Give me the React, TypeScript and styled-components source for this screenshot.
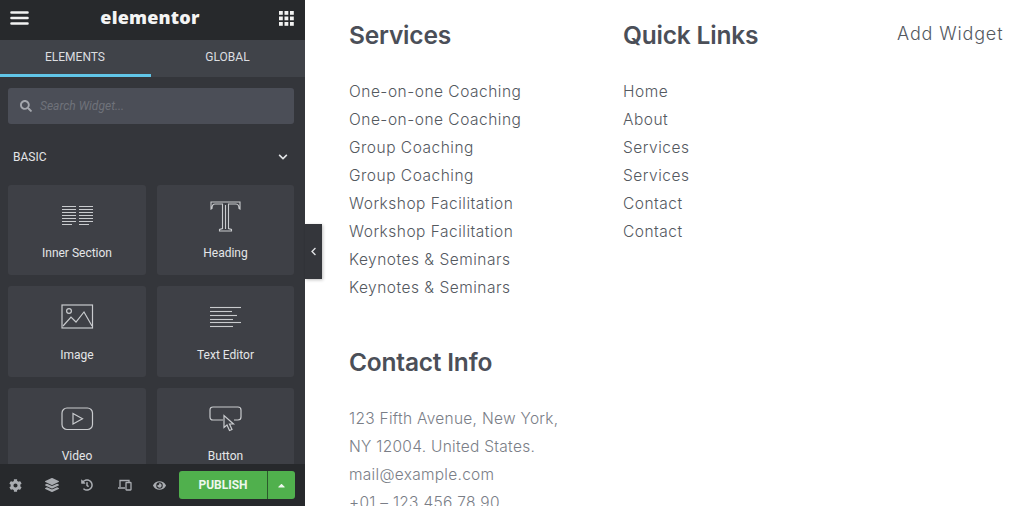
import React from "react";
import styled, { createGlobalStyle } from "styled-components";
import { FaCog, FaLayerGroup, FaHistory, FaEye, FaCaretUp, FaChevronDown, FaChevronLeft, FaSearch } from "react-icons/fa";

const GlobalStyle = createGlobalStyle`
    html, body {
        margin: 0;
        height: 100%;
        overflow: hidden;
        background: #fff;
    }
    * { box-sizing: border-box; }
`;

const Page = styled.div`
    display: flex;
    width: 1023px;
    height: 506px;
    overflow: hidden;
    position: relative;
`;

const Panel = styled.aside`
    width: 305px;
    height: 506px;
    flex: none;
    display: flex;
    flex-direction: column;
    background: #34363b;
    font-family: Roboto, "Liberation Sans", sans-serif;
    color: #e6e8ea;
`;

const Header = styled.header`
    height: 40px;
    flex: none;
    display: flex;
    align-items: center;
    justify-content: space-between;
    padding: 0 11px 4px 10px;
    background: #27292c;
`;

const Logo = styled.div`
    font-family: "Open Sans", sans-serif;
    font-weight: 800;
    font-size: 18px;
    letter-spacing: 0.2px;
    color: #f4f4f4;
    margin: -3px 8px 0 0;
`;

const Tabs = styled.div`
    display: flex;
    height: 37px;
    flex: none;
    background: #404349;
`;

const Tab = styled.div<{ $active?: boolean; $width: number }>`
    width: ${p => p.$width}px;
    display: flex;
    align-items: center;
    justify-content: center;
    font-size: 12px;
    padding: 1px 1px 1px 0;
    color: #dcdee0;
    border-bottom: 3px solid ${p => (p.$active ? "#61c6e8" : "transparent")};
`;

const SearchBox = styled.div`
    margin: 11px 11px 0 8px;
    height: 36px;
    flex: none;
    display: flex;
    align-items: center;
    gap: 8px;
    padding-left: 12px;
    border-radius: 3px;
    background: #4b4e57;
    color: #a4a7ad;
`;

const SearchHint = styled.span`
    font-size: 12px;
    font-style: italic;
    color: #6f727a;
`;

const SectionTitle = styled.div`
    height: 61px;
    flex: none;
    display: flex;
    align-items: center;
    justify-content: space-between;
    padding: 4px 17px 0 13px;
    font-size: 12px;
    color: #e3e5e7;
`;

const Widgets = styled.div`
    display: grid;
    grid-template-columns: 138px 137px;
    grid-template-rows: 90px 91px 90px;
    column-gap: 11px;
    row-gap: 11px;
    padding-left: 8px;
    height: 279px;
    flex: none;
    overflow: hidden;
`;

const Card = styled.div`
    display: flex;
    flex-direction: column;
    align-items: center;
    padding-bottom: 15px;
    border-radius: 3px;
    background: #3e4046;
    font-size: 12px;
    font-weight: 400;
    color: #e4e6e8;
`;

const CardIcon = styled.div`
    height: 61px;
    flex: none;
    margin-bottom: auto;
    display: flex;
    align-items: center;
    justify-content: center;
`;

const Footer = styled.footer`
    height: 42px;
    flex: none;
    display: flex;
    align-items: center;
    padding-left: 9px;
    background: #27292c;
    color: #a9acb1;
`;

const FooterIcon = styled.div<{ $width: number }>`
    width: ${p => p.$width}px;
    display: flex;
    font-size: 13px;
`;

const Publish = styled.div`
    display: flex;
    height: 28px;
    margin-left: 6px;
    border-radius: 3px;
    overflow: hidden;
    background: #50b04d;
    color: #eef7ee;
    font-size: 12px;
    font-weight: 700;
`;

const PublishLabel = styled.div`
    width: 89px;
    display: flex;
    align-items: center;
    justify-content: center;
    border-right: 1px solid #2b5a2b;
`;

const PublishCaret = styled.div`
    width: 27px;
    display: flex;
    align-items: center;
    justify-content: center;
    font-size: 11px;
`;

const Collapse = styled.div`
    position: absolute;
    left: 305px;
    top: 224px;
    width: 17px;
    height: 55px;
    display: flex;
    align-items: center;
    justify-content: center;
    background: #34363b;
    color: #dfe1e3;
    font-size: 9px;
    box-shadow: 1px 1px 3px rgba(0, 0, 0, 0.25);
`;

const Content = styled.main`
    flex: 1;
    display: grid;
    grid-template-columns: 274px 274px 1fr;
    padding: 18px 0 0 44px;
    color: #54595f;
`;

const Column = styled.section``;

const Title = styled.h2`
    margin: 0;
    height: 34px;
    line-height: 34px;
    font-family: Inter, sans-serif;
    font-size: 24.5px;
    font-weight: 600;
    letter-spacing: -0.2px;
    color: #4b4f58;
`;

const List = styled.ul<{ $muted?: boolean }>`
    list-style: none;
    margin: 26px 0 0;
    padding: 0;
    font-family: Inter, sans-serif;
    font-size: 15.5px;
    font-weight: 300;
    letter-spacing: ${p => (p.$muted ? "0.28px" : "0.5px")};
    line-height: 28px;
    white-space: nowrap;
    color: ${p => (p.$muted ? "#7a7e87" : "#54595f")};
`;

const ContactBlock = styled.div`
    margin-top: 43px;
`;

const AddWidget = styled.div`
    margin-top: 4px;
    font-family: Inter, sans-serif;
    font-size: 18px;
    font-weight: 300;
    letter-spacing: 0.85px;
    line-height: 24px;
    color: #54595f;
`;

const Line = ({ x1, x2, y }: { x1: number; x2: number; y: number }) => (
    <line x1={x1} x2={x2} y1={y} y2={y} />
);

const InnerSectionIcon = () => (
    <svg width="33" height="24" viewBox="0 0 33 24" fill="none" stroke="#c9cbce" strokeWidth="1">
        {[2, 5, 8, 11, 14, 17, 20].map((y, i) => (
            <React.Fragment key={y}>
                <Line x1={1} x2={i === 6 ? 11 : 15} y={y + 0.5} />
                <Line x1={18} x2={i === 6 ? 28 : 32} y={y + 0.5} />
            </React.Fragment>
        ))}
    </svg>
);

const HeadingIcon = () => (
    <svg width="31" height="32" viewBox="0 0 31 32" fill="none" stroke="#c9cbce" strokeWidth="1.1">
        <path d="M1 9V2h29v7l-1-.5c0-2.5-1-4.500-3-4.500h-7.500v24.500l3 1V31H9.500v-1.500l3-1V4H5C3 4 2 6 2 8.500z" />
        <path d="M15.500 5v24" />
    </svg>
);

const ImageIcon = () => (
    <svg width="33" height="26" viewBox="0 0 33 26" fill="none" stroke="#c9cbce" strokeWidth="1.2">
        <rect x="1" y="1" width="30.500" height="23" />
        <circle cx="8" cy="7" r="2.400" />
        <path d="M2 22l8-9 5 5 8-10 8 14" />
    </svg>
);

const TextEditorIcon = () => (
    <svg width="33" height="22" viewBox="0 0 33 22" fill="none" stroke="#c9cbce" strokeWidth="1.100">
        <Line x1={1} x2={32} y={1.5} />
        <Line x1={1} x2={23} y={5.5} />
        <Line x1={1} x2={28} y={9.5} />
        <Line x1={1} x2={24} y={13.500} />
        <Line x1={1} x2={32} y={16.500} />
        <Line x1={1} x2={24} y={20.500} />
    </svg>
);

const VideoIcon = () => (
    <svg width="33" height="24" viewBox="0 0 33 24" fill="none" stroke="#c9cbce" strokeWidth="1.200">
        <rect x="1" y="1" width="30.500" height="21.500" rx="5" />
        <path d="M12 6.500v10.500l9.500-5.250z" />
    </svg>
);

const ButtonIcon = () => (
    <svg width="33" height="26" viewBox="0 0 33 26" fill="none" stroke="#c9cbce" strokeWidth="1.200">
        <path d="M14 14H4c-2 0-3-1-3-3V4c0-2 1-3 3-3h25c2 0 3 1 3 3v7c0 2-1 3-3 3h-4" />
        <path d="M15 9.500v12l3-2.500 2.500 5.500 2.500-1-2.500-5.500h4z" fill="#3e4046" />
    </svg>
);

const MenuIcon = () => (
    <svg width="19" height="14" viewBox="0 0 19 14" stroke="#f2f2f2" strokeWidth="2.600" strokeLinecap="round">
        <path d="M1.500 1.500h16M1.500 7h16M1.500 12.500h16" />
    </svg>
);

const AppsIcon = () => (
    <svg width="15" height="15" viewBox="0 0 15 15" fill="#f2f2f2">
        {[0, 5.500, 11].flatMap(y =>
            [0, 5.500, 11].map(x => <rect key={`${x}-${y}`} x={x} y={y} width="3.800" height="3.800" />)
        )}
    </svg>
);

const ResponsiveIcon = () => (
    <svg width="14" height="12" viewBox="0 0 14 12" fill="none" stroke="#a9acb1" strokeWidth="1.300">
        <path d="M2 8V1.500h9V3M0 9h7" />
        <rect x="8" y="3.500" width="5" height="7.500" rx="0.500" />
    </svg>
);

const widgets = [
    { label: "Inner Section", icon: <InnerSectionIcon /> },
    { label: "Heading", icon: <HeadingIcon /> },
    { label: "Image", icon: <ImageIcon /> },
    { label: "Text Editor", icon: <TextEditorIcon /> },
    { label: "Video", icon: <VideoIcon /> },
    { label: "Button", icon: <ButtonIcon /> },
];

const services = [
    "One-on-one Coaching",
    "One-on-one Coaching",
    "Group Coaching",
    "Group Coaching",
    "Workshop Facilitation",
    "Workshop Facilitation",
    "Keynotes & Seminars",
    "Keynotes & Seminars",
];

const links = ["Home", "About", "Services", "Services", "Contact", "Contact"];

const contact = [
    "123 Fifth Avenue, New York,",
    "NY 12004. United States.",
    "mail@example.com",
    "+01 – 123 456 78 90",
];

const App = () => {
    return (
        <Page>
            <GlobalStyle />
            <Panel>
                <Header>
                    <MenuIcon />
                    <Logo>elementor</Logo>
                    <AppsIcon />
                </Header>
                <Tabs>
                    <Tab $active $width={151}>ELEMENTS</Tab>
                    <Tab $width={154}>GLOBAL</Tab>
                </Tabs>
                <SearchBox>
                    <FaSearch size={12} />
                    <SearchHint>Search Widget...</SearchHint>
                </SearchBox>
                <SectionTitle>
                    BASIC
                    <FaChevronDown size={10} />
                </SectionTitle>
                <Widgets>
                    {widgets.map(w => (
                        <Card key={w.label}>
                            <CardIcon>{w.icon}</CardIcon>
                            {w.label}
                        </Card>
                    ))}
                </Widgets>
                <Footer>
                    <FooterIcon $width={36}><FaCog /></FooterIcon>
                    <FooterIcon $width={36}><FaLayerGroup size={14} /></FooterIcon>
                    <FooterIcon $width={37}><FaHistory size={12} /></FooterIcon>
                    <FooterIcon $width={35}><ResponsiveIcon /></FooterIcon>
                    <FooterIcon $width={20}><FaEye /></FooterIcon>
                    <Publish>
                        <PublishLabel>PUBLISH</PublishLabel>
                        <PublishCaret><FaCaretUp /></PublishCaret>
                    </Publish>
                </Footer>
            </Panel>
            <Collapse><FaChevronLeft /></Collapse>
            <Content>
                <Column>
                    <Title>Services</Title>
                    <List>
                        {services.map((s, i) => <li key={i}>{s}</li>)}
                    </List>
                    <ContactBlock>
                        <Title>Contact Info</Title>
                        <List $muted>
                            {contact.map(c => <li key={c}>{c}</li>)}
                        </List>
                    </ContactBlock>
                </Column>
                <Column>
                    <Title>Quick Links</Title>
                    <List>
                        {links.map((l, i) => <li key={i}>{l}</li>)}
                    </List>
                </Column>
                <Column>
                    <AddWidget>Add Widget</AddWidget>
                </Column>
            </Content>
        </Page>
    );
};

export default App;
